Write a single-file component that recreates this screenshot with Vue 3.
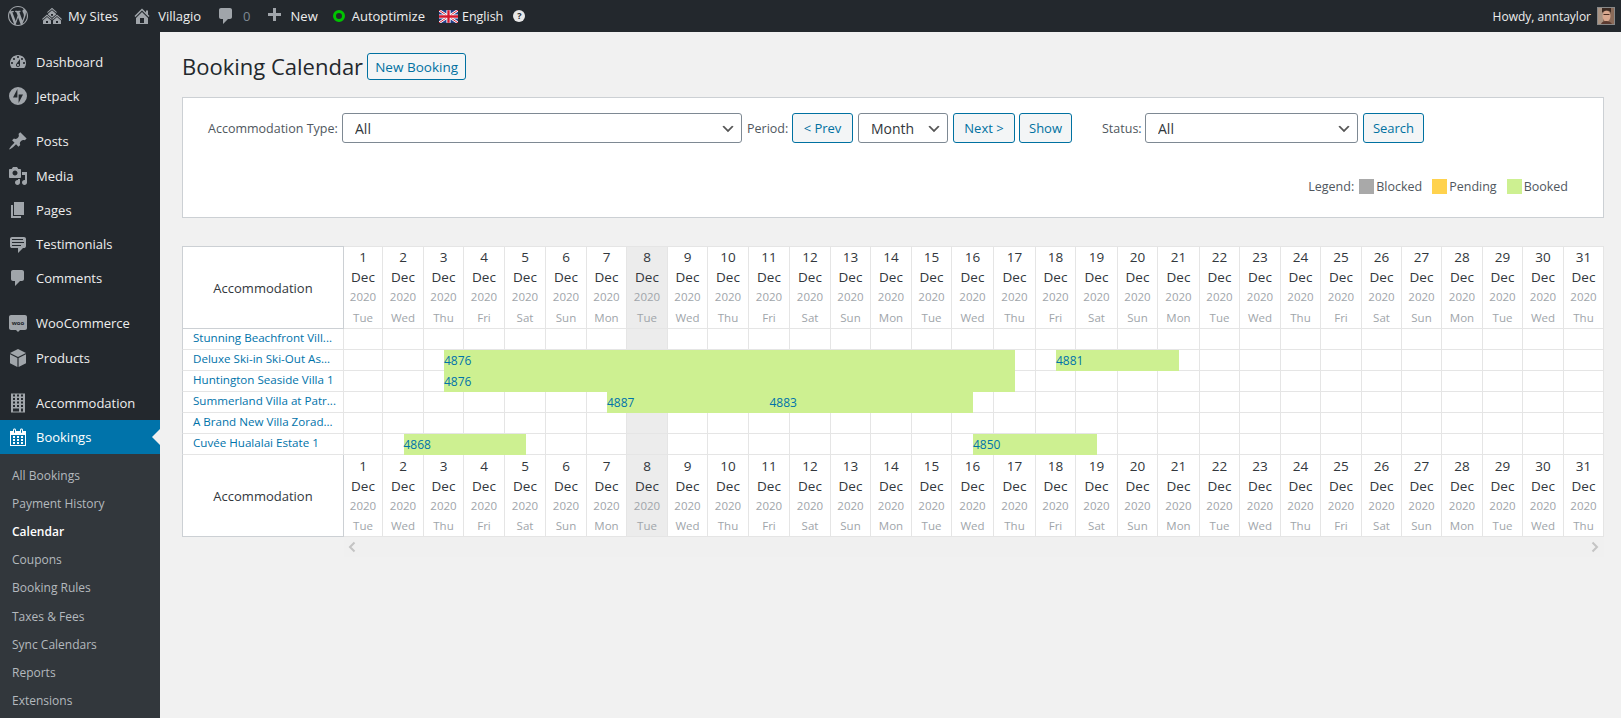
<script setup>
const P = {
  wp: 'M20 10c0-5.51-4.49-10-10-10C4.48 0 0 4.49 0 10c0 5.52 4.48 10 10 10 5.51 0 10-4.48 10-10zM7.78 15.37L4.37 6.22c.55-.02 1.17-.08 1.17-.08.5-.06.44-1.13-.06-1.11 0 0-1.45.11-2.37.11-.18 0-.37 0-.58-.01C4.12 2.69 6.87 1.11 10 1.11c2.33 0 4.45.87 6.05 2.34-.68-.11-1.65.39-1.65 1.58 0 .74.45 1.36.9 2.1.35.61.55 1.36.55 2.46 0 1.49-1.4 5-1.4 5l-3.03-8.37c.54-.02.82-.17.82-.17.5-.05.44-1.25-.06-1.22 0 0-1.44.12-2.38.12-.87 0-2.33-.12-2.33-.12-.5-.03-.56 1.2-.06 1.22l.92.08 1.26 3.41zM17.41 10c.24-.64.74-1.87.43-4.25.7 1.29 1.05 2.71 1.05 4.25 0 3.29-1.73 6.24-4.4 7.78.97-2.59 1.94-5.2 2.92-7.78zM6.1 18.09C3.12 16.65 1.11 13.53 1.11 10c0-1.3.23-2.48.72-3.59C3.25 10.3 4.67 14.2 6.1 18.09zm4.03-6.63l2.58 6.98c-.86.29-1.76.45-2.71.45-.79 0-1.57-.11-2.29-.33.81-2.38 1.62-4.74 2.42-7.1z',
  sites: 'M14.27 6.87L10 3.14 5.73 6.87 5 6.14l5-4.38 5 4.38zM14 8.42l-4.05 3.43L6 8.38v-.74l4-3.5 4 3.5v.78zM11 9.7V8H9v1.7h2zm-1.73 4.03L5 10 .73 13.73 0 13l5-4.38L10 13zm10 0L15 10l-4.27 3.73L10 13l5-4.38L20 13zM5 11l4 3.5V18H1v-3.5zm10 0l4 3.5V18h-8v-3.5zM6 17v-2H4v2h2zm10 0v-2h-2v2h2z',
  home: 'M16 8.5l1.53 1.53-1.06 1.06L10 4.62l-6.47 6.47-1.06-1.06L10 2.5l4 4v-2h2v4zm-6-2.46l6 5.99V18H4v-5.97zM12 17v-5H8v5h4z',
  comment: 'M5 2h9c1.1 0 2 .9 2 2v7c0 1.1-.9 2-2 2h-2l-5 5v-5H5c-1.1 0-2-.9-2-2V4c0-1.1.9-2 2-2z',
  plus: 'M17 7v3h-5v5H9v-5H4V7h5V2h3v5h5z',
  dashboard: 'M3.76 16h12.48c1.1-1.37 1.76-3.11 1.76-5 0-4.42-3.58-8-8-8s-8 3.58-8 8c0 1.89.66 3.63 1.76 5zM10 4c.55 0 1 .45 1 1s-.45 1-1 1-1-.45-1-1 .45-1 1-1zM6 6c.55 0 1 .45 1 1s-.45 1-1 1-1-.45-1-1 .45-1 1-1zm8 0c.55 0 1 .45 1 1s-.45 1-1 1-1-.45-1-1 .45-1 1-1zm-5.37 5.55L12 7v6c0 1.1-.9 2-2 2s-2-.9-2-2c0-.57.24-1.08.63-1.45zM4 10c.55 0 1 .45 1 1s-.45 1-1 1-1-.45-1-1 .45-1 1-1zm12 0c.55 0 1 .45 1 1s-.45 1-1 1-1-.45-1-1 .45-1 1-1zm-5 3c0-.55-.45-1-1-1s-1 .45-1 1 .45 1 1 1 1-.45 1-1z',
  jetpack: 'M10 1a9 9 0 1 0 0 18a9 9 0 0 0 0-18z M9.4 11.4H5L9.4 3z M10.6 8.6H15L10.6 17z',
  pin: 'M10.44 3.02l1.82-1.82 6.36 6.35-1.83 1.82c-1.05-.68-2.48-.57-3.41.36l-.75.75c-.92.93-1.04 2.35-.35 3.41l-1.83 1.82-2.41-2.41-2.8 2.79c-.42.42-3.38 2.71-3.8 2.29s1.86-3.39 2.28-3.81l2.79-2.79L4.1 9.36l1.83-1.82c1.05.69 2.48.57 3.4-.36l.75-.75c.93-.92 1.05-2.35.36-3.41z',
  media: 'M13 11V4c0-.55-.45-1-1-1h-1.67L9 1H5L3.67 3H2c-.55 0-1 .45-1 1v7c0 .55.45 1 1 1h10c.55 0 1-.45 1-1zM7 4.5c1.38 0 2.5 1.12 2.5 2.5S8.38 9.5 7 9.5 4.5 8.38 4.5 7 5.62 4.5 7 4.5zM14 6h5v10.5c0 1.38-1.12 2.5-2.5 2.5S14 17.88 14 16.5s1.12-2.5 2.5-2.5c.17 0 .34.02.5.05V9h-3V6zm-4 8.05V13h2v3.5c0 1.38-1.12 2.5-2.5 2.5S7 17.88 7 16.5 8.12 14 9.5 14c.17 0 .34.02.5.05z',
  page: 'M6 15V2h10v13H6zm-1 1h8v2H3V5h2v11z',
  testimonial: 'M4 3h12c.55 0 1.02.2 1.41.59S18 4.45 18 5v7c0 .55-.2 1.02-.59 1.41S16.55 14 16 14h-1l-5 5v-5H4c-.55 0-1.02-.2-1.41-.59S2 12.55 2 12V5c0-.55.2-1.02.59-1.41S3.45 3 4 3zm11 2H4v1h11V5zm1 3H4v1h12V8zm-3 3H4v1h9v-1z',
  woo: 'M3 2h14c1.1 0 2 .9 2 2v11c0 1.1-.9 2-2 2h-5l-2 2-2-2H3c-1.1 0-2-.9-2-2V4c0-1.1.9-2 2-2z',
  box: 'M10 1l8 4-8 4-8-4z M2 6.2l7.4 3.7V19L2 15.3z M18 6.2v9.1L10.6 19V9.9z',
  building: 'M3 19.5h14V.5H3zM7 3.5H5v-2h2zm4 0H9v-2h2zm4 0h-2v-2h2zM7 7H5V5h2zm4 0H9V5h2zm4 0h-2V5h2zM7 10.500H5v-2h2zm4 0H9v-2h2zm4 0h-2v-2h2zM7 14H5v-2h2zm4 0H9v-2h2zm4 0h-2v-2h2zM11 18.500H5V15.500h6zm4 0h-2V15.500h2z',
  calendar: 'M15 4h3v15H2V4h3V3c0-.41.15-.76.44-1.06.29-.29.65-.44 1.06-.44s.77.15 1.06.44c.29.3.44.65.44 1.06v1h4V3c0-.41.15-.76.44-1.06.29-.29.65-.44 1.06-.44s.77.15 1.06.44c.29.3.44.65.44 1.06v1zM6 3v2.500c0 .14.05.26.15.36.09.09.21.14.35.14s.26-.05.35-.14c.1-.1.15-.22.15-.36V3c0-.14-.05-.26-.15-.35-.09-.1-.21-.15-.35-.15s-.26.05-.35.15c-.1.09-.15.21-.15.35zm7 0v2.500c0 .14.05.26.14.36.1.09.22.14.36.14s.26-.05.36-.14c.09-.1.14-.22.14-.36V3c0-.14-.05-.26-.14-.35-.1-.1-.22-.15-.36-.15s-.26.05-.36.15c-.09.09-.14.21-.14.35zm4 15V8H3v10h14zM7 9v2H5V9h2zm2 0h2v2H9V9zm4 2V9h2v2h-2zm-6 1v2H5v-2h2zm2 0h2v2H9v-2zm4 2v-2h2v2h-2zm-6 1v2H5v-2h2zm4 2H9v-2h2v2zm4 0h-2v-2h2v2z',
}

const menu = [
  { label: 'Dashboard', icon: 'dashboard' },
  { label: 'Jetpack', icon: 'jetpack', sep: true },
  { label: 'Posts', icon: 'pin' },
  { label: 'Media', icon: 'media' },
  { label: 'Pages', icon: 'page' },
  { label: 'Testimonials', icon: 'testimonial' },
  { label: 'Comments', icon: 'comment', sep: true },
  { label: 'WooCommerce', icon: 'woo', wooText: true },
  { label: 'Products', icon: 'box', sep: true },
  { label: 'Accommodation', icon: 'building' },
  { label: 'Bookings', icon: 'calendar', active: true },
]
const sub = ['All Bookings', 'Payment History', 'Calendar', 'Coupons', 'Booking Rules', 'Taxes & Fees', 'Sync Calendars', 'Reports', 'Extensions']

const names = ['Tue', 'Wed', 'Thu', 'Fri', 'Sat', 'Sun', 'Mon']
const days = Array.from({ length: 31 }, (_, i) => ({ n: i + 1, name: names[i % 7] }))

const lines = [343, 382, 423, 463, 504, 545, 586, 626, 667, 707, 748, 789, 830, 870, 911, 951, 993, 1035, 1075, 1117, 1157, 1199, 1239, 1280, 1320, 1361, 1401, 1441, 1482, 1522, 1563, 1603]
const gridTemplate = '162px ' + lines.slice(1).map((x, i) => {
  const half = (x - lines[i]) / 2
  return `${half}px ${half}px`
}).join(' ')

const rows = [
  { name: 'Stunning Beachfront Vill...', bars: [] },
  { name: 'Deluxe Ski-in Ski-Out As...', bars: [{ id: 4876, from: 3, to: 17 }, { id: 4881, from: 18, to: 21 }] },
  { name: 'Huntington Seaside Villa 1', bars: [{ id: 4876, from: 3, to: 17 }] },
  { name: 'Summerland Villa at Patr...', bars: [{ id: 4887, from: 7, to: 11 }, { id: 4883, from: 11, to: 16 }] },
  { name: 'A Brand New Villa Zorad...', bars: [] },
  { name: 'Cuvée Hualalai Estate 1', bars: [{ id: 4868, from: 2, to: 5 }, { id: 4850, from: 16, to: 19 }] },
]
const cellCol = (d) => `${2 * d} / span 2`
const barCol = (b) => `${2 * b.from + 1} / ${2 * b.to + 1}`
</script>

<template>
  <div class="admin">
    <header class="bar">
      <div class="bar-group">
        <a class="bi logo"><svg class="ico" viewBox="0 0 20 20"><path :d="P.wp" /></svg></a>
        <a class="bi sites"><svg class="ico" viewBox="0 0 20 20"><path :d="P.sites" /></svg>My Sites</a>
        <a class="bi home"><svg class="ico" viewBox="0 0 20 20"><path :d="P.home" /></svg>Villagio</a>
        <a class="bi cmt"><svg class="ico" viewBox="0 0 20 20"><path :d="P.comment" /></svg><span class="zero">0</span></a>
        <a class="bi new"><svg class="ico" viewBox="0 0 20 20"><path :d="P.plus" /></svg>New</a>
        <a class="bi auto"><span class="ring"></span>Autoptimize</a>
        <a class="bi lang">
          <svg class="flag" viewBox="0 0 18 12">
            <rect width="18" height="12" fill="#24408e" />
            <path d="M0 0l18 12M18 0L0 12" stroke="#fff" stroke-width="2.400" />
            <path d="M0 0l18 12M18 0L0 12" stroke="#d3182e" stroke-width=".9" />
            <path d="M9 0v12M0 6h18" stroke="#fff" stroke-width="4" />
            <path d="M9 0v12M0 6h18" stroke="#d3182e" stroke-width="2.200" />
          </svg>English
        </a>
        <span class="help">?</span>
      </div>
      <div class="howdy">
        Howdy, anntaylor
        <svg class="avatar" viewBox="0 0 16 16">
          <rect width="16" height="16" fill="#8a6a58" />
          <rect x="0" y="0" width="5" height="16" fill="#a99484" />
          <ellipse cx="8.500" cy="8" rx="4" ry="5.500" fill="#d8a78e" />
          <path d="M4 6c0-4 9-5 9 0v-6H4z" fill="#3c2a22" />
          <path d="M5.500 6.500h6" stroke="#4a2d22" stroke-width="1" />
          <path d="M3 16c1-4 9-4 11 0z" fill="#5b3a30" />
        </svg>
      </div>
    </header>

    <div class="body">
      <aside class="side">
        <nav class="menu">
          <a v-for="m in menu" :key="m.label" class="mi" :class="{ active: m.active, sep: m.sep }">
            <span class="mi-ico">
              <svg viewBox="0 0 20 20"><path fill-rule="evenodd" :d="P[m.icon]" /><text v-if="m.wooText" x="10" y="12" class="wootxt">woo</text></svg>
            </span>
            {{ m.label }}
          </a>
        </nav>
        <ul class="submenu">
          <li v-for="s in sub" :key="s" :class="{ cur: s === 'Calendar' }">{{ s }}</li>
        </ul>
      </aside>

      <main class="main">
        <div class="title-row">
          <h1>Booking Calendar</h1>
          <a class="btn add">New Booking</a>
        </div>

        <section class="panel">
          <div class="filters">
            <label class="lbl type">Accommodation Type:</label>
            <select class="sel w-type"><option>All</option></select>
            <label class="lbl period">Period:</label>
            <button class="btn prev">&lt; Prev</button>
            <select class="sel w-month"><option>Month</option></select>
            <button class="btn next">Next &gt;</button>
            <button class="btn show">Show</button>
            <label class="lbl status">Status:</label>
            <select class="sel w-status"><option>All</option></select>
            <button class="btn search">Search</button>
          </div>
          <div class="legend">
            <span class="lg">Legend:</span>
            <i class="sw blocked"></i><span class="lt">Blocked</span>
            <i class="sw pending"></i><span class="lt">Pending</span>
            <i class="sw booked"></i><span class="lt">Booked</span>
          </div>
        </section>

        <div class="cal">
          <div class="tr head" :style="{ gridTemplateColumns: gridTemplate }">
            <div class="th">Accommodation</div>
            <div v-for="d in days" :key="d.n" class="dc" :class="{ today: d.n === 8 }" :style="{ gridColumn: cellCol(d.n) }">
              <span class="num">{{ d.n }}</span>
              <span class="mon">Dec</span>
              <span class="yr">2020</span>
              <span class="dn">{{ d.name }}</span>
            </div>
          </div>
          <div v-for="r in rows" :key="r.name" class="tr" :style="{ gridTemplateColumns: gridTemplate }">
            <div class="name"><a>{{ r.name }}</a></div>
            <div v-for="d in days" :key="d.n" class="cell" :class="{ today: d.n === 8 }" :style="{ gridColumn: cellCol(d.n) }"></div>
            <a v-for="b in r.bars" :key="b.id" class="booking" :style="{ gridColumn: barCol(b) }">{{ b.id }}</a>
          </div>
          <div class="tr head foot" :style="{ gridTemplateColumns: gridTemplate }">
            <div class="th">Accommodation</div>
            <div v-for="d in days" :key="d.n" class="dc" :class="{ today: d.n === 8 }" :style="{ gridColumn: cellCol(d.n) }">
              <span class="num">{{ d.n }}</span>
              <span class="mon">Dec</span>
              <span class="yr">2020</span>
              <span class="dn">{{ d.name }}</span>
            </div>
          </div>
          <div class="scroll">
            <svg viewBox="0 0 8 12"><path d="M6.500 1.500L2 6l4.500 4.500" /></svg>
            <svg viewBox="0 0 8 12"><path d="M1.500 1.500L6 6l-4.500 4.500" /></svg>
          </div>
        </div>
      </main>
    </div>
  </div>
</template>

<style>
html, body { margin: 0; background: #f1f1f1; overflow: hidden; }
</style>

<style scoped>
* { box-sizing: border-box; }
.admin { height: 718px; overflow: hidden; display: flex; flex-direction: column; font-family: "Open Sans", "Noto Sans", sans-serif; font-size: 13px; color: #444; }

.bar { height: 32px; background: #23282d; color: #eee; display: flex; justify-content: space-between; align-items: center; flex: none; }
.bar-group { display: flex; align-items: center; height: 32px; }
.bi { display: flex; align-items: center; white-space: nowrap; }
.ico { width: 20px; height: 20px; fill: #a0a5aa; display: block; }
.logo { margin-left: 8px; }
.sites { margin-left: 14px; }
.sites .ico { margin-right: 6px; }
.home { margin-left: 14px; }
.home .ico { margin-right: 6px; }
.cmt { margin-left: 15px; }
.zero { color: #7e8993; margin-left: 7px; }
.new { margin-left: 13px; }
.new .ico { margin-right: 7px; }
.auto { margin-left: 15px; }
.ring { width: 12px; height: 12px; border: 3px solid #00c400; border-radius: 50%; margin-right: 7px; }
.lang { margin-left: 14px; font-size: 12.500px; }
.flag { width: 19px; height: 13px; margin-right: 4px; }
.help { width: 12px; height: 12px; border-radius: 50%; background: #e8e8e8; color: #23282d; font-size: 9px; font-weight: 700; line-height: 12px; text-align: center; margin-left: 10px; }
.howdy { display: flex; align-items: center; gap: 6px; padding-right: 6px; white-space: nowrap; font-size: 12px; }
.avatar { width: 18px; height: 18px; border: 1px solid #888; display: block; }

.body { flex: 1; display: flex; min-height: 0; }
.side { width: 160px; flex: none; background: #23282d; padding-top: 13px; overflow: hidden; }
.menu { display: flex; flex-direction: column; }
.mi { height: 34.200px; display: flex; align-items: center; color: #eee; position: relative; }
.mi.sep { margin-bottom: 11px; }
.mi-ico { width: 36px; flex: none; display: flex; justify-content: center; padding-right: 1px; }
.mi-ico svg { width: 20px; height: 20px; fill: #a0a5aa; display: block; }
.wootxt { font-size: 6px; font-weight: 700; text-anchor: middle; fill: #23282d; }
.mi.active { background: #0073aa; color: #fff; }
.mi.active .mi-ico svg { fill: #fff; }
.mi.active::after { content: ""; position: absolute; right: 0; top: 9px; border: 8px solid transparent; border-right-color: #f1f1f1; border-left-width: 0; }
.submenu { list-style: none; margin: 0; padding: 8px 0 60px 12px; background: #32373c; color: #b4b9be; font-size: 12px; }
.submenu li { height: 28.100px; line-height: 28px; }
.submenu .cur { color: #fff; font-weight: 600; }

.main { flex: 1; min-width: 0; padding: 21px 17px 0 22px; }
.title-row { display: flex; align-items: center; height: 27px; gap: 4px; }
h1 { margin: 0; font-size: 22px; font-weight: 400; color: #23282d; line-height: 27px; white-space: nowrap; }
.btn { height: 30px; display: inline-flex; align-items: center; justify-content: center; border: 1px solid #0071a1; border-radius: 3px; background: #f3f5f6; color: #0071a1; font: inherit; padding: 0; white-space: nowrap; flex: none; }
.add { height: 27px; width: 99px; font-size: 13.500px; background: #f3f5f6; }
.prev { width: 61px; }
.next { width: 62px; }
.show { width: 53px; margin-left: -1px; }
.search { width: 61px; }

.panel { margin-top: 17px; height: 121px; background: #fff; border: 1px solid #ccd0d4; }
.filters { display: flex; align-items: center; height: 30px; margin-top: 15px; margin-left: 25px; gap: 5px; }
.lbl { white-space: nowrap; color: #50575e; flex: none; font-size: 12.500px; }
.type { width: 130px; margin-right: -1px; }
.period { width: 40px; }
.status { width: 38px; margin-left: 25px; }
.sel { height: 30px; appearance: none; -webkit-appearance: none; border: 1px solid #7e8993; border-radius: 3px; padding: 0 24px 0 12px; color: #32373c; font: inherit; font-size: 14px; flex: none; background: #fff url("data:image/svg+xml;charset=US-ASCII,%3Csvg xmlns='http://www.w3.org/2000/svg' width='20' height='20'%3E%3Cpath d='M5 6l5 5 5-5 2 1-7 7-7-7z' fill='%23555'/%3E%3C/svg%3E") no-repeat right 5px top 55%; background-size: 16px 16px; }
.w-type { width: 400px; }
.w-month { width: 90px; }
.w-status { width: 213px; }
.legend { display: flex; align-items: center; justify-content: flex-end; margin-top: 33px; height: 20px; padding-right: 35px; color: #50575e; font-size: 12.500px; }
.lg { margin-right: 5px; }
.sw { width: 15px; height: 15px; display: block; margin-right: 2px; }
.lt { margin-right: 10px; }
.lt:last-child { margin-right: 0; }
.blocked { background: #a9a9a9; }
.pending { background: #ffd24d; }
.booked { background: #cdf091; }

.cal { margin-top: 28px; }
.tr { display: grid; height: 21px; }
.head { height: 83px; }
.foot { height: 81px; margin-bottom: 1px; }
.th { grid-row: 1; grid-column: 1; background: #fff; border: 1px solid #ccd0d4; display: flex; align-items: center; justify-content: center; color: #32373c; font-size: 13px; }
.foot .th { border-top: 0; }
.dc { grid-row: 1; background: #fff; border-right: 1px solid #e5e5e5; border-bottom: 1px solid #e5e5e5; display: flex; flex-direction: column; align-items: center; text-align: center; }
.head:first-child .dc { border-top: 1px solid #e5e5e5; }
.foot .num { margin-top: 1px; }
.num, .mon { height: 20px; line-height: 20px; font-size: 13.500px; color: #32373c; }
.yr { height: 19px; line-height: 19px; font-size: 11.500px; color: #a0a5aa; }
.dn { height: 22px; line-height: 24px; font-size: 11.500px; color: #a0a5aa; }
.foot .dn { height: 21px; line-height: 22px; }
.today { background: #ececec; }
.name { grid-row: 1; grid-column: 1; background: #fff; border-left: 1px solid #ccd0d4; border-right: 1px solid #e5e5e5; border-bottom: 1px solid #e5e5e5; padding-left: 10px; font-size: 11.600px; line-height: 18px; height: 21px; overflow: hidden; white-space: nowrap; color: #0073aa; }
.cell { grid-row: 1; background: #fff; border-right: 1px solid #e5e5e5; border-bottom: 1px solid #e5e5e5; }
.cell.today { background: #ececec; }
.dc.today { background: #ececec; }
.booking { grid-row: 1; background: #cdf091; color: #0073aa; font-size: 12px; line-height: 21px; z-index: 1; white-space: nowrap; }
.scroll { margin-left: 162px; height: 20px; background: #f0f0f0; display: flex; justify-content: space-between; align-items: center; padding: 0 5px 0 4px; }
.scroll svg { width: 8px; height: 12px; fill: none; stroke: #c4c4c4; stroke-width: 2; display: block; }
</style>
